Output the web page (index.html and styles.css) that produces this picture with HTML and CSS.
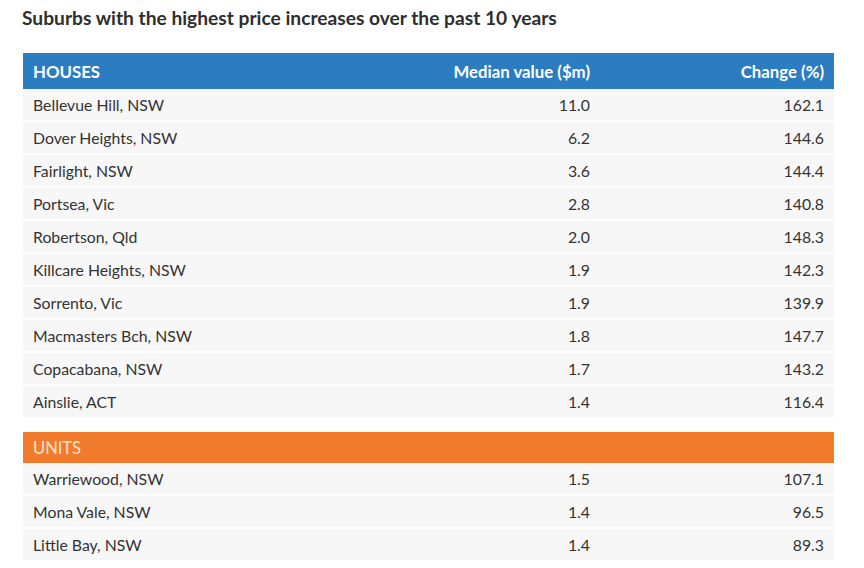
FILE: index.html
```html
<!DOCTYPE html>
<html>
<head>
<meta charset="utf-8">
<link rel="stylesheet" href="styles.css">
</head>
<body>
<div class="page">
  <h1 class="title">Suburbs with the highest price increases over the past 10 years</h1>
  <div class="table">
    <div class="row head houses"><span>HOUSES</span><span class="num">Median value ($m)</span><span class="num">Change (%)</span></div>
    <div class="row"><span>Bellevue Hill, NSW</span><span class="num">11.0</span><span class="num">162.1</span></div>
    <div class="row"><span>Dover Heights, NSW</span><span class="num">6.2</span><span class="num">144.6</span></div>
    <div class="row"><span>Fairlight, NSW</span><span class="num">3.6</span><span class="num">144.4</span></div>
    <div class="row"><span>Portsea, Vic</span><span class="num">2.8</span><span class="num">140.8</span></div>
    <div class="row"><span>Robertson, Qld</span><span class="num">2.0</span><span class="num">148.3</span></div>
    <div class="row"><span>Killcare Heights, NSW</span><span class="num">1.9</span><span class="num">142.3</span></div>
    <div class="row"><span>Sorrento, Vic</span><span class="num">1.9</span><span class="num">139.9</span></div>
    <div class="row"><span>Macmasters Bch, NSW</span><span class="num">1.8</span><span class="num">147.7</span></div>
    <div class="row"><span>Copacabana, NSW</span><span class="num">1.7</span><span class="num">143.2</span></div>
    <div class="row"><span>Ainslie, ACT</span><span class="num">1.4</span><span class="num">116.4</span></div>
    <div class="row head units"><span>UNITS</span><span></span><span></span></div>
    <div class="row"><span>Warriewood, NSW</span><span class="num">1.5</span><span class="num">107.1</span></div>
    <div class="row"><span>Mona Vale, NSW</span><span class="num">1.4</span><span class="num">96.5</span></div>
    <div class="row"><span>Little Bay, NSW</span><span class="num">1.4</span><span class="num">89.3</span></div>
  </div>
</div>
</body>
</html>
```
FILE: styles.css
```css
* { box-sizing: border-box; }
body {
  margin: 0;
  background: #ffffff;
  font-family: Lato, "Open Sans", sans-serif;
  color: #333333;
}
.page {
  padding: 7px 30px 0 23px;
}
.title {
  margin: 0 0 0 -1px;
  font-size: 19.2px;
  line-height: 22px;
  font-weight: 700;
  color: #2e2e2e;
}
.table {
  margin-top: 24px;
  width: 811px;
}
.row {
  display: grid;
  grid-template-columns: 1fr 200px 234px;
  align-items: center;
  height: 33px;
  padding: 0 10px;
  font-size: 15.8px;
  background: #f7f7f7;
  border-bottom: 2px solid #ffffff;
}
.num { text-align: right; }
.head {
  font-weight: 700;
  border-bottom: 0;
}
.houses {
  height: 36px;
  font-size: 16.8px;
  background: #2b7cc1;
  color: #ffffff;
  padding-top: 1px;
}
.units {
  height: 31px;
  margin-top: 13px;
  font-size: 16.5px;
  background: #f07b2d;
  color: #fde3cc;
  font-weight: 400;
}
```
